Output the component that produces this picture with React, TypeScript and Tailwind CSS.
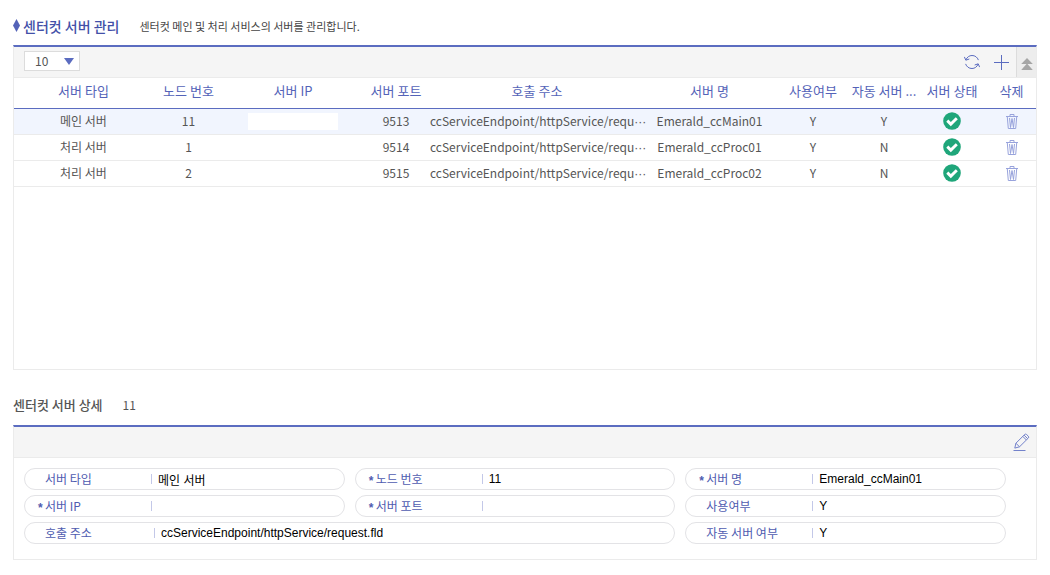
import { useId, useState } from "react";

interface ServerItem {
  type: string;
  node: number;
  masked?: boolean;
  port: number;
  url: string;
  name: string;
  use: string;
  auto: string;
}

const servers: ServerItem[] = [
  {
    type: "메인 서버",
    node: 11,
    masked: true,
    port: 9513,
    url: "ccServiceEndpoint/httpService/request.fld",
    name: "Emerald_ccMain01",
    use: "Y",
    auto: "Y",
  },
  {
    type: "처리 서버",
    node: 1,
    port: 9514,
    url: "ccServiceEndpoint/httpService/request.fld",
    name: "Emerald_ccProc01",
    use: "Y",
    auto: "N",
  },
  {
    type: "처리 서버",
    node: 2,
    port: 9515,
    url: "ccServiceEndpoint/httpService/request.fld",
    name: "Emerald_ccProc02",
    use: "Y",
    auto: "N",
  },
];

const columns = [
  { label: "서버 타입", width: "w-[139px]" },
  { label: "노드 번호", width: "w-[71px]" },
  { label: "서버 IP", width: "w-[138px]" },
  { label: "서버 포트", width: "w-[68px]" },
  { label: "호출 주소", width: "w-[214px]" },
  { label: "서버 명", width: "w-[131px]" },
  { label: "사용여부", width: "w-[76px]" },
  { label: "자동 서버 ...", width: "w-[66px]" },
  { label: "서버 상태", width: "w-[70px]" },
  { label: "삭제", width: "w-[49px]" },
];

const MAX_URL = 34;

const RefreshIcon = () => (
  <svg width="16" height="16" viewBox="0 0 16 16" fill="none" stroke="#5b6cc0">
    <path d="M1.900 5.900C3 3.100 5.300 1.500 8 1.500c3 0 5.400 1.700 6.400 4.600" />
    <path d="M14.100 10.100C13 12.900 10.700 14.500 8 14.500c-3 0-5.400-1.700-6.400-4.600" />
    <path d="M.4 2.900l1.400 3.300 3.500-1.200" />
    <path d="M15.600 13.100l-1.400-3.300-3.500 1.200" />
  </svg>
);

const PlusIcon = () => (
  <svg width="15" height="15" viewBox="0 0 15 15" stroke="#5b6cc0">
    <path d="M7.500 0v15M0 7.500h15" />
  </svg>
);

const CollapseIcon = () => (
  <svg width="12" height="12" viewBox="0 0 12 12" fill="#a6a6a6">
    <path d="M6 0l5.800 6H.2zM6 5.500l5.800 6.500H.2z" />
  </svg>
);

const PencilIcon = () => (
  <svg
    width="17"
    height="18"
    viewBox="0 0 17 18"
    fill="none"
    stroke="#7382cb"
    strokeLinejoin="round"
  >
    <path d="M2.900 10.200L11.700 1.500q1-.9 2 .1l1.600 1.600q.9.900 0 1.900L6.500 13.800l-4.700 1.300z" />
    <path d="M2.900 10.200l3.600 3.600M9.800 3.400l3.600 3.600M11.100 2.100l3.600 3.600" />
    <path d="M.5 17.500h12" />
  </svg>
);

const CheckIcon = () => (
  <svg width="18" height="18" viewBox="0 0 18 18" className="mx-auto block" role="img" aria-label="정상">
    <circle cx="9" cy="9" r="8.800" fill="#1fa67a" />
    <path d="M4.300 8.600l3.500 3.500 6-5.900" fill="none" stroke="#fff" strokeWidth="2.900" />
  </svg>
);

const TrashIcon = () => (
  <svg
    width="12"
    height="15"
    viewBox="0 0 12 15"
    fill="none"
    stroke="#98a3dc"
    className="mx-auto block"
  >
    <path d="M0 2.500h12M4 2.300V.5h4v1.800" />
    <path d="M1.300 3l1 11.500h7.400l1-11.500" />
    <path d="M3.500 4l1 9.500L6 4.500l1.500 9 1-9.500" />
  </svg>
);

interface FieldProps {
  label: string;
  value: string;
  required?: boolean;
  wide?: boolean;
}

const Field = ({ label, value, required, wide }: FieldProps) => {
  const id = useId();

  return (
    <div
      className={`flex h-[22px] items-center rounded-full border border-[#e3e3e6] pl-[13px] ${
        wide ? "col-span-2" : ""
      }`}
    >
      <span className="w-[7px] flex-none pt-1 font-['Liberation_Sans',sans-serif] text-xs leading-4 font-bold text-[#4f5cb0]">
        {required ? "*" : ""}
      </span>
      <label
        htmlFor={id}
        className={`flex-none text-xs leading-5 text-[#4f5cb0] ${wide ? "w-[109px]" : "w-[106px]"}`}
      >
        {label}
      </label>
      <span className="h-[10px] w-px flex-none bg-[#c3c8e8]" />
      <input
        id={id}
        value={value}
        readOnly
        className="ml-[6px] h-5 min-w-0 flex-1 bg-transparent font-['Liberation_Sans','Noto_Sans_CJK_KR',sans-serif] text-xs text-black outline-none"
      />
    </div>
  );
};

export default function App() {
  const [selected, setSelected] = useState(0);
  const current = servers[selected];

  return (
    <main className="px-[13px] pt-4 font-['Noto_Sans_CJK_KR',sans-serif] text-[#555]">
      <header className="flex h-[29px] items-start">
        <svg width="7" height="13" viewBox="0 0 7 13" className="mt-[3px]">
          <path d="M3.500 0L7 6.500 3.500 13 0 6.500z" fill="#5463b8" />
        </svg>
        <h1 className="ml-[3px] text-sm leading-5 font-medium text-[#4350a8]">
          센터컷 서버 관리
        </h1>
        <p className="ml-5 text-[11px] leading-[21px] text-[#444]">
          센터컷 메인 및 처리 서비스의 서버를 관리합니다.
        </p>
      </header>

      <section className="h-[325px] border border-t-2 border-[#ebebeb] border-t-[#5b6cc0]">
        <div className="flex h-[31px] items-center border-b border-[#ebebeb] bg-[#f5f5f5]">
          <div className="ml-[10px] grid h-[22px]">
            <select
              aria-label="목록 수"
              className="col-start-1 row-start-1 h-5 w-14 appearance-none border border-[#dcdcdc] bg-white pl-[10px] text-xs leading-[18px] text-[#555]"
            >
              <option>10</option>
              <option>20</option>
              <option>50</option>
            </select>
            <svg
              width="10"
              height="7"
              viewBox="0 0 10 7"
              fill="#5b6cc0"
              className="pointer-events-none col-start-1 row-start-1 mt-[7px] mr-[6px] justify-self-end"
            >
              <path d="M0 0h10L5 7z" />
            </svg>
          </div>
          <button className="ml-auto" title="새로고침">
            <RefreshIcon />
          </button>
          <button className="ml-[14px]" title="추가">
            <PlusIcon />
          </button>
          <button
            className="ml-[7px] flex h-[30px] w-[20px] items-center justify-center border-l border-[#dcdcdc] bg-[#ededed] pt-1"
            title="접기"
          >
            <CollapseIcon />
          </button>
        </div>

        <table className="w-full table-fixed border-collapse text-center text-xs">
          <thead>
            <tr className="h-[30px] border-b border-[#5b6cc0] text-[#5463b8]">
              {columns.map((column) => (
                <th
                  key={column.label}
                  className={`${column.width} p-0 pb-1 text-[13px] leading-5 font-normal whitespace-nowrap`}
                >
                  {column.label}
                </th>
              ))}
            </tr>
          </thead>
          <tbody>
            {servers.map((server, index) => (
              <tr
                key={server.node}
                onClick={() => setSelected(index)}
                className={`h-[26px] border-b border-[#ebebeb] leading-5 ${
                  index === selected ? "bg-[#f1f5fe]" : ""
                }`}
              >
                <td className="p-0">{server.type}</td>
                <td className="p-0">{server.node}</td>
                <td className="p-0">
                  {server.masked && <span className="mx-auto block h-[17px] w-[90px] bg-white" />}
                </td>
                <td className="p-0">{server.port}</td>
                <td className="p-0 whitespace-nowrap" title={server.url}>
                  {server.url.slice(0, MAX_URL)}
                  {server.url.length > MAX_URL && (
                    <span className="font-['Liberation_Sans',sans-serif]">···</span>
                  )}
                </td>
                <td className="p-0">{server.name}</td>
                <td className="p-0">{server.use}</td>
                <td className="p-0">{server.auto}</td>
                <td className="p-0">
                  <CheckIcon />
                </td>
                <td className="p-0">
                  <button className="block w-full" title="삭제">
                    <TrashIcon />
                  </button>
                </td>
              </tr>
            ))}
          </tbody>
        </table>
      </section>

      <header className="flex h-[55px] items-center pt-[14px]">
        <h2 className="text-[13px] leading-5 font-medium">센터컷 서버 상세</h2>
        <span className="ml-5 text-xs leading-5">{current.node}</span>
      </header>

      <section className="border border-t-2 border-[#ebebeb] border-t-[#5b6cc0]">
        <div className="flex h-[31px] items-center justify-end border-b border-[#ebebeb] bg-[#f5f5f5] pr-[6px]">
          <button title="수정">
            <PencilIcon />
          </button>
        </div>
        <div className="grid grid-cols-3 gap-x-[10px] gap-y-[5px] pt-[10px] pr-[30px] pb-[15px] pl-[10px]">
          <Field label="서버 타입" value={current.type} />
          <Field label="노드 번호" value={String(current.node)} required />
          <Field label="서버 명" value={current.name} required />
          <Field label="서버 IP" value="" required />
          <Field label="서버 포트" value="" required />
          <Field label="사용여부" value={current.use} />
          <Field label="호출 주소" value={current.url} wide />
          <Field label="자동 서버 여부" value={current.auto} />
        </div>
      </section>
    </main>
  );
}
